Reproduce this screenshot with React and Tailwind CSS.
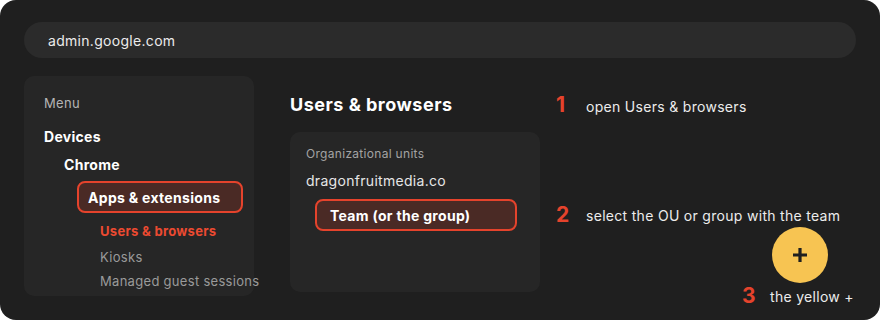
export default function App() {
  const font = { fontFamily: 'Inter, "Noto Sans", sans-serif' };
  return (
    <div className="w-[880px] h-[320px] bg-white">
      <div
        className="w-[880px] h-[320px] rounded-[16px] bg-[#1f1f1f] px-[24px] pt-[22px] overflow-hidden text-[#ececec] tracking-[0.3px]"
        style={font}
      >
        <div className="h-[36px] rounded-full bg-[#2b2b2b] flex items-center pl-[24px] text-[14px]">
          admin.google.com
        </div>
        <div className="flex mt-[18px]">
          {/* Menu panel */}
          <div className="w-[230px] h-[220px] rounded-[10px] bg-[#262626] pl-[20px] pt-[17px] flex flex-col">
            <div className="text-[13px] leading-[20px] text-[#b5b5b5]">Menu</div>
            <div className="mt-[14px] text-[14px] leading-[20px] font-bold text-white">Devices</div>
            <div className="mt-[8px] ml-[20px] text-[14px] leading-[20px] font-bold text-white">Chrome</div>
            <div className="mt-[6px] ml-[33px] w-[166px] h-[32px] rounded-[8px] border-2 border-[#e5432c] bg-[#4a2a25] flex items-center pl-[9px] text-[14px] font-bold text-white">
              Apps &amp; extensions
            </div>
            <div className="mt-[9px] ml-[56px] text-[13px] leading-[18px] font-bold text-[#ec4a31]">Users &amp; browsers</div>
            <div className="mt-[8px] ml-[56px] text-[13px] leading-[18px] text-[#9a9a9a]">Kiosks</div>
            <div className="mt-[6px] ml-[56px] text-[13px] leading-[18px] text-[#9a9a9a] whitespace-nowrap">Managed guest sessions</div>
          </div>
          {/* Main */}
          <div className="ml-[36px] w-[250px] flex flex-col">
            <div className="mt-[17px] text-[18px] leading-[24px] font-bold text-white tracking-[0.5px]">Users &amp; browsers</div>
            <div className="mt-[15px] h-[160px] rounded-[10px] bg-[#262626] pl-[16px] pt-[14px] flex flex-col">
              <div className="text-[12px] leading-[16px] text-[#a3a3a3]">Organizational units</div>
              <div className="mt-[9px] text-[14px] leading-[20px] text-[#e6e6e6]">dragonfruitmedia.co</div>
              <div className="mt-[8px] ml-[9px] w-[202px] h-[32px] rounded-[8px] border-2 border-[#e5432c] bg-[#4a2a25] flex items-center pl-[13px] text-[14px] font-bold text-white">
                Team (or the group)
              </div>
            </div>
          </div>
          {/* Steps */}
          <div className="ml-[16px] flex flex-col">
            <div className="mt-[17px] flex items-center h-[24px]">
              <span className="w-[30px] text-[21px] font-bold text-[#e5432c] leading-[24px]">1</span>
              <span className="text-[14px] text-[#ececec] mt-[2px]">open Users &amp; browsers</span>
            </div>
            <div className="mt-[86px] flex items-center h-[24px]">
              <span className="w-[30px] text-[21px] font-bold text-[#e5432c] leading-[24px]">2</span>
              <span className="text-[14px] text-[#ececec]">select the OU or group with the team</span>
            </div>
            <div className="mt-[0px] ml-[216px] w-[56px] h-[56px] rounded-full bg-[#f7c452] flex items-center justify-center">
              <svg width="18" height="18" viewBox="0 0 18 18">
                <path d="M9 2v14M2 9h14" stroke="#1f1f1f" strokeWidth="3.2" />
              </svg>
            </div>
            <div className="mt-[1px] ml-[186px] flex items-center h-[24px]">
              <span className="w-[28px] text-[21px] font-bold text-[#e5432c] leading-[24px]">3</span>
              <span className="text-[14px] text-[#ececec]">the yellow +</span>
            </div>
          </div>
        </div>
      </div>
    </div>
  );
}
